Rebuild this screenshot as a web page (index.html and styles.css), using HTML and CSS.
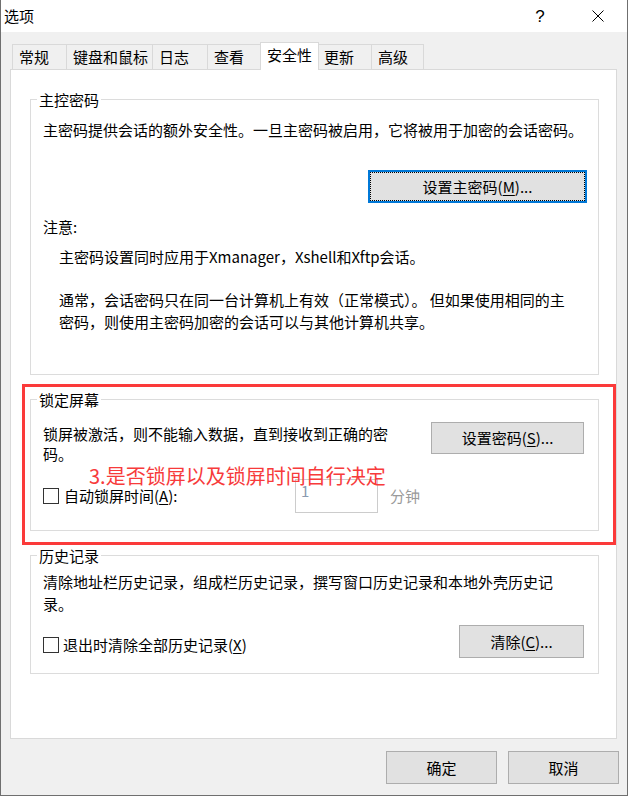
FILE: index.html
```html
<!DOCTYPE html>
<html lang="zh-CN">
<head>
<meta charset="utf-8">
<title>选项</title>
<link rel="stylesheet" href="styles.css">
</head>
<body>
<div class="window">
  <div class="titlebar">
    <span class="title">选项</span>
    <span class="tb-btn help">?</span>
    <span class="tb-btn close">
      <svg width="12" height="12" viewBox="0 0 12 12"><path d="M0.5 0.5 L11.5 11.5 M11.5 0.5 L0.5 11.5" stroke="#000" stroke-width="1" fill="none"/></svg>
    </span>
  </div>
  <div class="client">
    <div class="tabs">
      <div class="tab t54">常规</div>
      <div class="tab t86">键盘和鼠标</div>
      <div class="tab t55">日志</div>
      <div class="tab t55">查看</div>
      <div class="tab t55 selected">安全性</div>
      <div class="tab t54">更新</div>
      <div class="tab t53 last">高级</div>
    </div>
    <div class="panel">
      <fieldset class="group">
        <legend>主控密码</legend>
        <div class="gbody g1">
          <p class="desc">主密码提供会话的额外安全性。一旦主密码被启用，它将被用于加密的会话密码。</p>
          <div class="btnrow"><button class="btn default w219">设置主密码(<u>M</u>)...</button></div>
          <p class="note-title">注意:</p>
          <p class="note-line">主密码设置同时应用于Xmanager，Xshell和Xftp会话。</p>
          <p class="note-para">通常，会话密码只在同一台计算机上有效（正常模式）。 但如果使用相同的主密码，则使用主密码加密的会话可以与其他计算机共享。</p>
        </div>
      </fieldset>
      <fieldset class="group gap">
        <legend>锁定屏幕</legend>
        <div class="gbody g2">
          <div class="row top">
            <p class="lock-text">锁屏被激活，则不能输入数据，直到接收到正确的密码。</p>
            <button class="btn w153">设置密码(<u>S</u>)...</button>
          </div>
          <div class="row mid">
            <label class="check lockcheck"><span class="cb"></span><span>自动锁屏时间(<u>A</u>):</span></label>
            <div class="num">1</div>
            <span class="unit">分钟</span>
          </div>
        </div>
      </fieldset>
      <fieldset class="group gap">
        <legend>历史记录</legend>
        <div class="gbody g3">
          <p class="hist-text">清除地址栏历史记录，组成栏历史记录，撰写窗口历史记录和本地外壳历史记录。</p>
          <div class="row hist-row">
            <label class="check histcheck"><span class="cb"></span><span>退出时清除全部历史记录(<u>X</u>)</span></label>
            <button class="btn w125">清除(<u>C</u>)...</button>
          </div>
        </div>
      </fieldset>
    </div>
    <div class="footer">
      <button class="btn w111">确定</button>
      <button class="btn w111">取消</button>
    </div>
  </div>
  <div class="annot-box"></div>
  <div class="annot-text">3.是否锁屏以及锁屏时间自行决定</div>
</div>
</body>
</html>
```
FILE: styles.css
```css
* { box-sizing: border-box; }
html, body { margin: 0; padding: 0; background: #ffffff; }
body {
  font-family: "Noto Sans CJK SC", "Noto Sans", sans-serif;
  font-size: 15px;
  color: #000;
}
p { margin: 0; }
u { text-decoration: underline; text-underline-offset: 2px; }

.window {
  position: relative;
  width: 628px;
  height: 796px;
  border-left: 1px solid #6f6f6f;
  border-right: 1px solid #6f6f6f;
  border-bottom: 1px solid #6f6f6f;
  background: #f0f0f0;
  display: flex;
  flex-direction: column;
}

.titlebar {
  height: 32px;
  background: #ffffff;
  display: flex;
  align-items: center;
}
.title {
  padding-left: 3px;
  line-height: 20px;
  flex: 1;
}
.tb-btn {
  width: 58px;
  height: 32px;
  display: flex;
  align-items: center;
  justify-content: center;
}
.help {
  font-family: "Liberation Sans", sans-serif;
  font-size: 17px;
  line-height: 32px;
  padding-top: 1px;
}
.close svg { display: block; }

.client {
  flex: 1;
  display: flex;
  flex-direction: column;
}

.tabs {
  display: flex;
  align-items: flex-end;
  height: 27px;
  margin-top: 10px;
  padding-left: 11px;
}
.tab {
  height: 25px;
  border-top: 1px solid #d9d9d9;
  border-left: 1px solid #d9d9d9;
  background: #f0f0f0;
  line-height: 24px;
  padding-left: 6px;
  white-space: nowrap;
}
.tab.last { border-right: 1px solid #d9d9d9; }
.t53 { width: 53px; }
.t54 { width: 54px; }
.t55 { width: 55px; }
.t86 { width: 86px; }
.tab.selected {
  position: relative;
  z-index: 1;
  width: 59px;
  height: 28px;
  margin: 0 -2px -1px -2px;
  background: #ffffff;
  border-right: 1px solid #d9d9d9;
  line-height: 24px;
  padding-left: 6px;
}

.panel {
  margin-left: 9px;
  width: 607px;
  height: 670px;
  background: #ffffff;
  border: 1px solid #d9d9d9;
  padding: 20px 0 0 19px;
}

.group {
  width: 569px;
  margin: 0;
  padding: 0;
  border: 1px solid #dcdcdc;
  min-width: 0;
}
.group.gap { margin-top: 15px; }
.group legend {
  margin-left: 6px;
  padding: 0 2px;
  line-height: 19px;
  height: 19px;
}

.gbody { padding-left: 12px; }
.g1 { padding-bottom: 41px; }
.g1 .desc { margin-top: 10px; line-height: 22px; padding-right: 12px; }
.btnrow {
  display: flex;
  justify-content: flex-end;
  margin-top: 29px;
  padding-right: 11px;
}
.note-title { margin-top: 13px; line-height: 22px; }
.note-line { margin-top: 8px; padding-left: 16px; line-height: 22px; }
.note-para { margin-top: 21px; padding-left: 16px; width: 536px; line-height: 22px; }

.btn {
  font-family: inherit;
  font-size: 15px;
  color: #000;
  background: #e1e1e1;
  border: 1px solid #adadad;
  height: 32px;
  padding: 0;
  margin: 0;
  line-height: 20px;
}
.btn.default {
  border: 2px solid #0078d7;
  height: 33px;
  outline: 1px dotted #000;
  outline-offset: -3px;
}
.w219 { width: 219px; }
.w153 { width: 153px; }
.w125 { width: 125px; height: 33px; }
.w111 { width: 111px; height: 33px; }

.row { display: flex; }
.g2 { padding-bottom: 17px; }
.row.top {
  padding-top: 13px;
  justify-content: space-between;
  align-items: flex-start;
  padding-right: 14px;
}
.lock-text { width: 350px; margin-top: 2px; line-height: 20px; }
.row.mid {
  margin-top: 15px;
  height: 34px;
  align-items: center;
}
.check {
  display: flex;
  align-items: center;
  gap: 5px;
  line-height: 20px;
}
.lockcheck { width: 252px; }
.cb {
  width: 16px;
  height: 16px;
  border: 1px solid #333333;
  background: #ffffff;
  flex: none;
}
.num {
  width: 83px;
  height: 34px;
  border: 1px solid #cccccc;
  background: #ffffff;
  color: #8a9ab0;
  padding: 2px 0 0 5px;
  line-height: 18px;
}
.unit { margin-left: 12px; color: #9a9a9a; line-height: 20px; }

.g3 { padding-bottom: 15px; }
.hist-text { margin-top: 6px; width: 518px; line-height: 22px; }
.hist-row {
  margin-top: 10px;
  justify-content: space-between;
  align-items: flex-start;
  padding-right: 14px;
}
.histcheck { margin-top: 10px; gap: 4px; }

.footer {
  display: flex;
  justify-content: flex-end;
  gap: 11px;
  padding: 12px 8px 0 0;
}

.annot-box {
  position: absolute;
  left: 21px;
  top: 384px;
  width: 594px;
  height: 161px;
  border: 3px solid #fb3a3a;
}
.annot-text {
  position: absolute;
  left: 88px;
  top: 464px;
  font-size: 20px;
  line-height: 24px;
  color: #f73b3b;
  white-space: nowrap;
}
```
